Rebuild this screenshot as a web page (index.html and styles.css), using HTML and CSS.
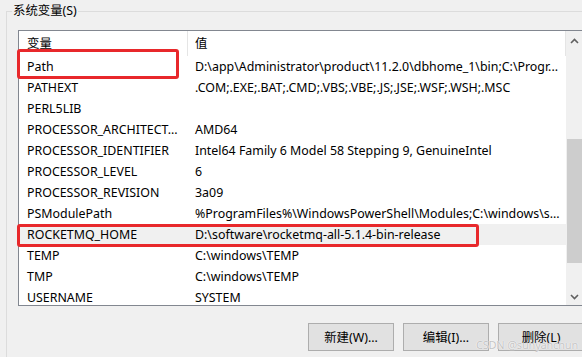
FILE: index.html
```html
<!DOCTYPE html>
<html lang="zh-CN">
<head>
<meta charset="UTF-8">
<title>系统变量</title>
<link rel="stylesheet" href="styles.css">
</head>
<body>
<fieldset class="group">
    <legend>系统变量(S)</legend>
    <div class="list">
        <div class="table">
            <div class="head">
                <div class="name">变量</div>
                <div class="value">值</div>
            </div>
            <div class="row"><div class="name">Path</div><div class="value">D:\app\Administrator\product\11.2.0\dbhome_1\bin;C:\Progr...</div></div>
            <div class="row"><div class="name">PATHEXT</div><div class="value">.COM;.EXE;.BAT;.CMD;.VBS;.VBE;.JS;.JSE;.WSF;.WSH;.MSC</div></div>
            <div class="row"><div class="name">PERL5LIB</div><div class="value"></div></div>
            <div class="row"><div class="name">PROCESSOR_ARCHITECT...</div><div class="value">AMD64</div></div>
            <div class="row"><div class="name">PROCESSOR_IDENTIFIER</div><div class="value">Intel64 Family 6 Model 58 Stepping 9, GenuineIntel</div></div>
            <div class="row"><div class="name">PROCESSOR_LEVEL</div><div class="value">6</div></div>
            <div class="row"><div class="name">PROCESSOR_REVISION</div><div class="value">3a09</div></div>
            <div class="row"><div class="name">PSModulePath</div><div class="value">%ProgramFiles%\WindowsPowerShell\Modules;C:\windows\s...</div></div>
            <div class="row selected"><div class="name">ROCKETMQ_HOME</div><div class="value">D:\software\rocketmq-all-5.1.4-bin-release</div></div>
            <div class="row"><div class="name">TEMP</div><div class="value">C:\windows\TEMP</div></div>
            <div class="row"><div class="name">TMP</div><div class="value">C:\windows\TEMP</div></div>
            <div class="row"><div class="name">USERNAME</div><div class="value">SYSTEM</div></div>
        </div>
        <div class="scroll">
            <div class="arrow up"><svg width="9" height="6" viewBox="0 0 9 6"><polyline points="1,5 4.5,1.5 8,5" fill="none" stroke="#606060" stroke-width="1.6"/></svg></div>
            <div class="track"><div class="thumb"></div></div>
            <div class="arrow down"><svg width="9" height="6" viewBox="0 0 9 6"><polyline points="1,1 4.5,4.5 8,1" fill="none" stroke="#606060" stroke-width="1.6"/></svg></div>
        </div>
        <!-- red annotation boxes -->
        <div class="mark-box box-path"></div>
        <div class="mark-box box-rocket"></div>
    </div>
    <div class="buttons">
        <button>新建(W)...</button>
        <button>编辑(I)...</button>
        <button>删除(L)</button>
    </div>
</fieldset>
<div class="watermark">CSDN @sunyanchun</div>
</body>
</html>
```

FILE: styles.css
```css
body {
    margin: 0;
    width: 582px;
    height: 357px;
    overflow: hidden;
    position: relative;
    background-color: #f0f0f0;
    font-family: "Noto Sans", "Noto Sans CJK SC", sans-serif;
    font-size: 12.4px;
    color: #000;
}
.group {
    margin: 3px 0 0 6px;
    padding: 0;
    border: 1px solid #dcdcdc;
    width: 640px;
    height: 400px;
    box-sizing: border-box;
    min-inline-size: 0;
}
.group legend {
    margin-left: 5px;
    padding: 0 1px;
    line-height: 16px;
}
.list {
    position: relative;
    display: flex;
    margin: 11px 0 0 11px;
    width: 566px;
    height: 276px;
    box-sizing: border-box;
    border: 1px solid #828790;
    background-color: #fff;
}
.table {
    flex: 1;
    overflow: hidden;
}
.head, .row {
    display: flex;
    white-space: nowrap;
}
.head {
    height: 25px;
    line-height: 25px;
}
.row {
    height: 21px;
    line-height: 21px;
}
.name {
    width: 169px;
    flex-shrink: 0;
    padding-left: 8px;
    box-sizing: border-box;
    overflow: hidden;
}
.value {
    flex: 1;
    padding-left: 7px;
    overflow: hidden;
}
.head .name {
    border-right: 1px solid #e5e5e5;
}
.head .value {
    border-right: 1px solid #e5e5e5;
}
.row.selected {
    background-color: #f0f0f0;
}
.scroll {
    width: 17px;
    display: flex;
    flex-direction: column;
    background-color: #f0f0f0;
}
.arrow {
    height: 17px;
    display: flex;
    align-items: center;
    justify-content: center;
}
.arrow svg {
    display: block;
}
.arrow.up {
    padding-top: 2px;
    box-sizing: border-box;
}
.track {
    flex: 1;
}
.thumb {
    margin: 91px 1px 0 1px;
    height: 124px;
    background-color: #cdcdcd;
}
.mark-box {
    position: absolute;
    border: 3px solid #e8282b;
    border-radius: 3px;
    box-sizing: border-box;
}
.box-path {
    left: -2px;
    top: 18px;
    width: 162px;
    height: 30px;
}
.box-rocket {
    left: -2px;
    top: 193px;
    width: 462px;
    height: 23px;
}
.buttons {
    display: flex;
    justify-content: flex-end;
    gap: 9px;
    margin: 17px 0 0 11px;
    width: 566px;
}
.buttons button {
    width: 86px;
    height: 28px;
    padding: 0;
    background-color: #e1e1e1;
    border: 1px solid #adadad;
    font: inherit;
    color: #000;
}
.watermark {
    position: absolute;
    right: 4px;
    bottom: 5px;
    font-size: 11px;
    letter-spacing: -0.2px;
    color: #c4c4c4;
    text-shadow: 0 0 1px #fff, 0 0 1px #fff;
}
```
